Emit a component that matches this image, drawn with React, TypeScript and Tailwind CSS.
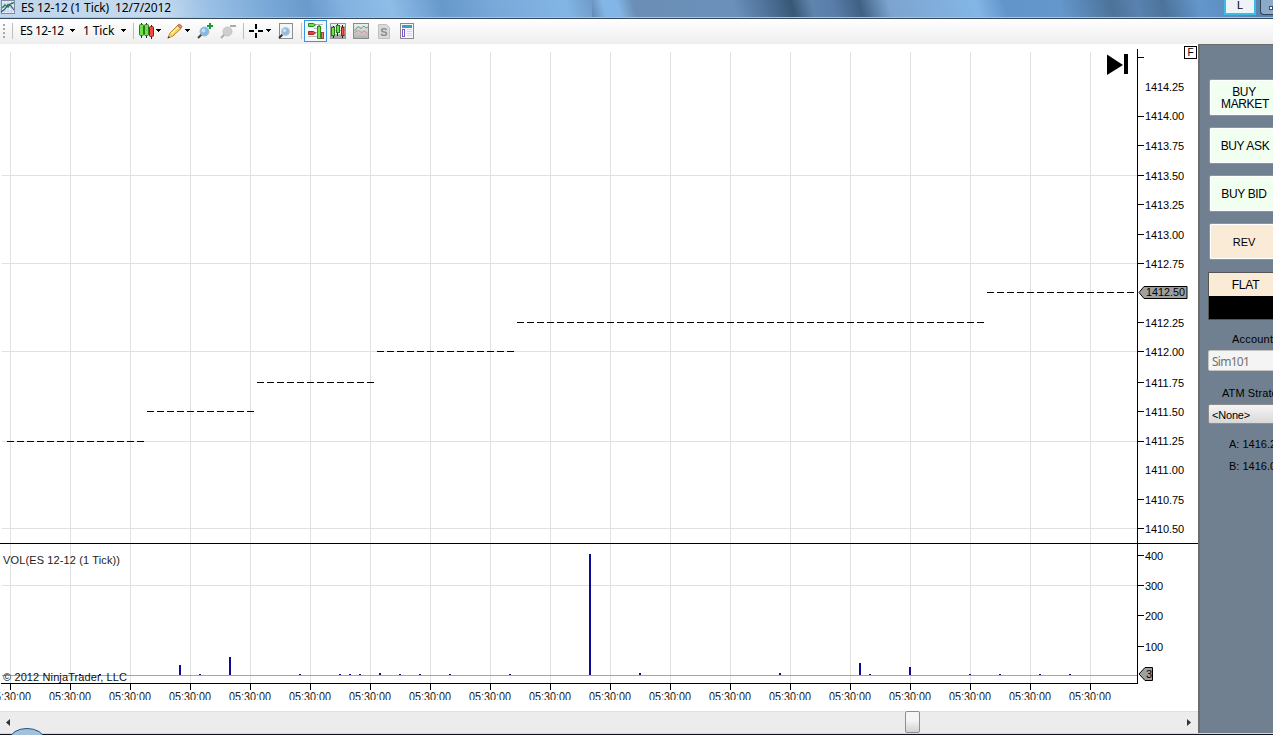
import type { ReactNode } from "react";

interface Run {
  from: number;
  to: number;
  y: number;
}

const GRID_X = Array.from({ length: 19 }, (_, i) => 10 + i * 60);
const GRID_Y = [175, 263, 351, 441, 528, 585];

// y is the tick row, base the text baseline
const PRICES: { label: string; y: number; base: number; tick: boolean }[] = [
  { label: "1414.25", y: 87, base: 91, tick: false },
  { label: "1414.00", y: 116, base: 120, tick: true },
  { label: "1413.75", y: 145, base: 150, tick: true },
  { label: "1413.50", y: 175, base: 180, tick: true },
  { label: "1413.25", y: 204, base: 209, tick: true },
  { label: "1413.00", y: 234, base: 239, tick: true },
  { label: "1412.75", y: 263, base: 268, tick: true },
  { label: "1412.25", y: 322, base: 327, tick: true },
  { label: "1412.00", y: 351, base: 356, tick: true },
  { label: "1411.75", y: 382, base: 387, tick: true },
  { label: "1411.50", y: 411, base: 416, tick: true },
  { label: "1411.25", y: 441, base: 445, tick: true },
  { label: "1411.00", y: 470, base: 474, tick: false },
  { label: "1410.75", y: 499, base: 504, tick: true },
  { label: "1410.50", y: 528, base: 533, tick: true },
];

const VOLUMES = [
  { label: "400", y: 555 },
  { label: "300", y: 585 },
  { label: "200", y: 615 },
  { label: "100", y: 646 },
];

const RUNS: Run[] = [
  { from: 7, to: 144, y: 441 },
  { from: 147, to: 254, y: 411 },
  { from: 257, to: 374, y: 382 },
  { from: 377, to: 514, y: 351 },
  { from: 517, to: 984, y: 322 },
  { from: 987, to: 1137, y: 292 },
];

// [x, top]
const BARS: [number, number][] = [
  [79, 674], [99, 674], [179, 665], [199, 674], [229, 657], [299, 674], [339, 674],
  [349, 674], [359, 674], [379, 673], [399, 674], [419, 674], [449, 674], [509, 674],
  [589, 554], [639, 673], [779, 673], [859, 663], [869, 674], [909, 667], [969, 674],
  [999, 674], [1039, 674], [1069, 674],
];

function Caret() {
  return (
    <svg width="5" height="3" className="shrink-0" shapeRendering="crispEdges">
      <path d="M0 0h5L2.5 3z" fill="#000" />
    </svg>
  );
}

function Separator() {
  return <span className="h-4 w-px shrink-0 bg-[#bdbdbd]" />;
}

function Icon({ children }: { children: ReactNode }) {
  return (
    <svg width="16" height="16" viewBox="0 0 16 16" className="block shrink-0" fill="none">
      {children}
    </svg>
  );
}

function CandlesIcon() {
  return (
    <Icon>
      <path d="M3.500 0v15M8.500 0v15M13.500 2v14" stroke="#222" />
      <rect x="1.500" y="1.500" width="4" height="11" rx="1" fill="#6ee04a" stroke="#287a1c" />
      <rect x="6.500" y="1.500" width="4" height="11" rx="1" fill="#6ee04a" stroke="#287a1c" />
      <rect x="11.500" y="3.500" width="4" height="10" rx="1" fill="#ee4a40" stroke="#8b2018" />
    </Icon>
  );
}

function PencilIcon() {
  return (
    <Icon>
      <path d="M1 15l2-5L11 2l3 3.500L6 13z" fill="#f3d052" stroke="#b88a26" />
      <path d="M4 11L12 3.500" stroke="#fff3a8" strokeWidth="1.500" />
      <path d="M10.500 2.500L12.500 1 15 3.500 13.500 5.500z" fill="#e08878" stroke="#a86a50" />
      <path d="M1 15l1.500-4L5 13.500z" fill="#e2b98b" />
      <path d="M.5 15.500l1-2.500 1.500 1.500z" fill="#333" />
    </Icon>
  );
}

function ZoomInIcon() {
  return (
    <Icon>
      <path d="M4.500 11.500L1 15" stroke="#444" strokeWidth="2" />
      <circle cx="7.500" cy="8.500" r="4.500" fill="#86b7e2" stroke="#a8b8c6" />
      <circle cx="6.500" cy="7.500" r="2" fill="#c0def5" />
      <path d="M13 0v6M10 3h6" stroke="#169a3a" strokeWidth="2" />
    </Icon>
  );
}

function ZoomOutIcon() {
  return (
    <Icon>
      <path d="M4.500 11.500L1 15" stroke="#aaa" strokeWidth="2" />
      <circle cx="7.500" cy="8.500" r="4.500" fill="#cfcfcf" stroke="#c4c4c4" />
      <path d="M10 3h6" stroke="#aaa" strokeWidth="2" />
    </Icon>
  );
}

function CrosshairIcon() {
  return (
    <svg width="14" height="14" className="block shrink-0" shapeRendering="crispEdges">
      <path d="M7 0v5M7 9v5M0 7h5M9 7h5" stroke="#000" strokeWidth="2" />
    </svg>
  );
}

function FrameZoomIcon() {
  return (
    <Icon>
      <rect x="2.500" y=".5" width="13" height="15" fill="#f5f5f5" stroke="#8e8e8e" />
      <path d="M5.500 11.500L2 15" stroke="#333" strokeWidth="2" />
      <circle cx="8.500" cy="8.500" r="4" fill="#8ebce2" stroke="#b8c8d4" />
      <circle cx="7.500" cy="7.500" r="1.800" fill="#c6e0f4" />
    </Icon>
  );
}

function ChartTraderIcon() {
  return (
    <Icon>
      <path d="M6 1.500h9M6 5.500h8M6 9.500h9M0 13.500h10" stroke="#b9b9b9" />
      <path d="M.5.5h5l2 1.500-2 1.500h-5z" fill="#6fe04a" stroke="#2d8a1c" />
      <path d="M.5 8.500h5l2 1.500-2 1.500h-5z" fill="#e64538" stroke="#98281c" />
      <path d="M11 2v14" stroke="#333" />
      <rect x="9.500" y="3.500" width="3" height="12" fill="#79e052" stroke="#348a20" />
      <rect x="13.500" y="9.500" width="2" height="6" fill="#ef7a70" stroke="#9c4038" />
    </Icon>
  );
}

function BarStyleIcon() {
  return (
    <Icon>
      <rect x=".5" y=".5" width="15" height="15" fill="#eee" stroke="#999" />
      <path d="M1 12h14v3H1z" fill="#a8a8a8" />
      <path d="M1 3.500h14M1 7.500h14M1 11.500h14" stroke="#bbb" />
      <path d="M3.500 3v12M7.500 1v12M12.500 2v13" stroke="#222" />
      <rect x="1.500" y="4.500" width="3" height="8" fill="#6ee04a" stroke="#287a1c" />
      <rect x="6.500" y="2.500" width="3" height="7" fill="#6ee04a" stroke="#287a1c" />
      <rect x="11.500" y="4.500" width="2.500" height="8" fill="#e8584e" stroke="#8b2018" />
    </Icon>
  );
}

function IndicatorIcon() {
  return (
    <Icon>
      <defs>
        <linearGradient id="indicator-bg" x1="0" y1="0" x2="0" y2="1">
          <stop offset="0" stopColor="#f0f0f0" />
          <stop offset="1" stopColor="#b0b0b0" />
        </linearGradient>
      </defs>
      <rect x=".5" y=".5" width="15" height="15" fill="url(#indicator-bg)" stroke="#8a8a8a" />
      <path d="M1.500 8L5 3.500l3 2 3-2.500 2 2 2-1" stroke="#56a978" />
      <path d="M1.500 9.500l4-2 3 2 3-1.500 3 2.500" stroke="#dc8a8a" />
    </Icon>
  );
}

function StrategyIcon() {
  return (
    <Icon>
      <path d="M2.500 1.500h8l3 3v11h-11z" fill="#dadada" stroke="#c0c0c0" />
      <text x="8" y="12.500" textAnchor="middle" fill="#8c8c8c" className="font-['Liberation_Sans',sans-serif] text-[11px] font-bold">
        S
      </text>
    </Icon>
  );
}

function PropertiesIcon() {
  return (
    <Icon>
      <rect x="1.500" y=".5" width="13" height="15" fill="#f4f6fc" stroke="#898989" />
      <path d="M3 3.500h10" stroke="#3e9cc8" strokeWidth="3" />
      <rect x="3.500" y="6.500" width="2" height="7" fill="#fff" stroke="#8452d0" />
      <path d="M8 6.500h5M8 8.500h5M8 10.500h5M8 12.500h5" stroke="#d4d4e4" />
    </Icon>
  );
}

function TitleBar() {
  return (
    <header className="relative flex h-[19px] shrink-0 items-start overflow-hidden border-b border-[#34495e] bg-[linear-gradient(75deg,#bfd6ec_0px,#c5daee_160px,#9dc2e6_200px,#79a9d8_260px,#6a9acb_300px,#83b2e0_335px,#8fbde8_380px,#6799cc_430px,#79a8d9_480px,#82b5e5_550px,#6b93bf_585px,#6a8eb5_632px,#6b90ba_710px,#5f84ad_740px)]">
      {/* blurred desktop showing through the glass */}
      <div className="absolute inset-y-0 left-[592px] right-0 bg-[linear-gradient(75deg,#6288b4_0px,#83b5e6_14px,#83b5e6_28px,#6a8eb5_44px,#6b90ba_140px,#4b6f94_175px,#385876_196px,#5f84ae_216px,#587da8_236px,#3f6184_262px,#7da4cf_290px,#83b6e6_375px,#6296cb_402px,#6497cc_455px,#4c7399_505px,#5a82b0_530px,#4c739b_555px,#6397cc_590px,#567ba5_670px)]" />
      <svg width="16" height="15" viewBox="0 0 16 15" className="shrink-0" fill="none">
        <rect x="1.500" y=".5" width="13" height="13" fill="#e8eef7" stroke="#7e8aa8" />
        <path d="M2 4h12M2 7.500h12M2 11h12M4.500 1v12M8 1v12M11.500 1v12" stroke="#b6c1dc" strokeWidth=".6" />
        <path d="M2 8l3-3L8 7l2-3 4-1.500" stroke="#1b9445" strokeWidth="1.500" />
        <path d="M1 12l4-3 3-4.500 3 1.500 3 4" stroke="#34578e" strokeWidth="1.200" />
      </svg>
      <span className="ml-[5px] whitespace-pre text-[12px] leading-[16px] tracking-[-0.11px] text-black">
        {"ES 12-12 (1 Tick)  12/7/2012"}
      </span>
      <div className="relative ml-auto flex shrink-0">
        <span className="mr-1 h-[15px] w-8 border-2 border-t-0 border-[#39bde0] bg-[#eef3f7] text-center font-['Liberation_Sans',sans-serif] text-[11px] leading-[11px]">
          L
        </span>
        <span className="flex h-[15px] w-[13px] items-end rounded-bl border border-r-0 border-t-0 border-[#2f445a] bg-[#8ba9c9] pb-1 pl-2">
          <span className="h-1 w-2 border border-[#3d4d60] bg-white" />
        </span>
      </div>
      <div className="absolute inset-x-0 bottom-0 h-px bg-[#a9c4df]" />
    </header>
  );
}

function Toolbar() {
  return (
    <div className="flex h-[25px] shrink-0 items-center bg-linear-to-b from-white to-[#eeeeee] pb-[2px] text-[12px] text-black">
      <svg width="2" height="14" className="ml-[3px] shrink-0" shapeRendering="crispEdges">
        <path d="M1 0v14" stroke="#a9a9a9" strokeWidth="2" strokeDasharray="2 2" />
      </svg>
      <span className="ml-[7px] flex"><Separator /></span>
      <span className="ml-[7px] w-[45px] whitespace-nowrap tracking-[-0.5px]">ES 12-12</span>
      <span className="ml-[5px] flex"><Caret /></span>
      <span className="ml-2 w-8 whitespace-nowrap tracking-[-0.1px]">1 Tick</span>
      <span className="ml-[6px] mr-[7px] flex"><Caret /></span>
      <Separator />
      <span className="ml-[4px] flex items-center gap-[2px]"><CandlesIcon /><Caret /></span>
      <span className="ml-[6px] flex items-center gap-[2px]"><PencilIcon /><Caret /></span>
      <span className="ml-[7px] flex gap-[7px]"><ZoomInIcon /><ZoomOutIcon /></span>
      <span className="ml-[7px] mr-[5px] flex"><Separator /></span>
      <span className="flex items-center gap-[3px]"><CrosshairIcon /><Caret /></span>
      <span className="ml-[6px] mr-[8px] flex"><FrameZoomIcon /></span>
      <Separator />
      <span className="ml-[2px] flex h-[22px] w-[23px] shrink-0 items-center justify-center border border-[#3a96dc] bg-[#f3f8fd]">
        <ChartTraderIcon />
      </span>
      <span className="ml-[3px] flex gap-[7px]">
        <BarStyleIcon />
        <IndicatorIcon />
        <StrategyIcon />
        <PropertiesIcon />
      </span>
    </div>
  );
}

function Chart() {
  return (
    <svg
      width="1198"
      height="667"
      viewBox="0 44 1198 667"
      className="block shrink-0 bg-white font-['Liberation_Sans',sans-serif] text-[11px]"
    >
      <g shapeRendering="crispEdges">
        {GRID_X.map((x) => (
          <rect key={x} x={x} y={52} width={1} height={631} fill="#e0e0e0" />
        ))}
        {GRID_Y.map((y) => (
          <rect key={y} x={2} y={y} width={1135} height={1} fill="#e0e0e0" />
        ))}
        {RUNS.map((run) => (
          <path key={run.y} d={`M${run.from} ${run.y + 0.5}H${run.to}`} stroke="#000" strokeDasharray="7 3" />
        ))}
        <rect x={2} y={675} width={1135} height={1} fill="#a5a5a5" />
        {BARS.map(([x, top]) => (
          <rect key={x} x={x} y={top} width={2} height={675 - top} fill="#0a0a96" />
        ))}

        {/* axes */}
        <rect x={0} y={543} width={1198} height={1} />
        <rect x={1137} y={49} width={1} height={635} />
        <rect x={1} y={683} width={1137} height={1} />
        <rect x={1138} y={57} width={6} height={1} />
        {PRICES.filter((p) => p.tick).map((p) => (
          <rect key={p.label} x={1138} y={p.y} width={6} height={1} />
        ))}
        {VOLUMES.map((v) => (
          <rect key={v.label} x={1138} y={v.y} width={6} height={1} />
        ))}
        {GRID_X.map((x) => (
          <rect key={x} x={x} y={684} width={1} height={6} />
        ))}
      </g>

      {PRICES.map((p) => (
        <text key={p.label} x={1145} y={p.base} textLength={39}>
          {p.label}
        </text>
      ))}
      {VOLUMES.map((v) => (
        <text key={v.label} x={1145} y={v.y + 5} textLength={18}>
          {v.label}
        </text>
      ))}

      <clipPath id="time-row">
        <rect x={0} y={690} width={1198} height={10} />
      </clipPath>
      <g clipPath="url(#time-row)" className="text-[12px]">
        {GRID_X.map((x) => (
          <text key={x} x={x - 21} y={701} textLength={42} lengthAdjust="spacingAndGlyphs" fill="#222">
            05:30:00
          </text>
        ))}
      </g>

      <text x={3} y={564} textLength={117} fill="#222">
        VOL(ES 12-12 (1 Tick))
      </text>
      <text x={3} y={681} textLength={124} fill="#111">
        © 2012 NinjaTrader, LLC
      </text>

      {/* price and volume markers */}
      <path d="M1139 292.500l5-6h43v12h-43z" fill="#a0a0a0" stroke="#000" />
      <text x={1146} y={296} textLength={39} lengthAdjust="spacingAndGlyphs" className="text-[10px]">
        1412.50
      </text>
      <path d="M1139 674l6-6.500h7.500v13h-7.500z" fill="#a0a0a0" stroke="#000" />
      <text x={1146} y={678}>
        3
      </text>

      <path d="M1107 54.500l16 10.500-16 10z" />
      <rect x={1124} y={54} width={4} height={20} />
      <rect x={1184.5} y={46.5} width={12} height={12} fill="#fff" stroke="#000" />
      <text x={1187.5} y={56} className="text-[10px]">
        F
      </text>
    </svg>
  );
}

function ScrollBar() {
  return (
    <div className="flex h-[23px] shrink-0 items-center border-t border-[#e0e0e0] bg-[#ececec] pb-[2px]">
      <svg width="4" height="7" className="ml-[6px]">
        <path d="M4 0v7L0 3.500z" fill="#333" />
      </svg>
      <span className="ml-[895px] h-[22px] w-[15px] shrink-0 rounded-[2px] border border-[#8f8f8f] bg-linear-to-b from-[#f5f5f5] from-40% to-[#d2d2d4]" />
      <svg width="4" height="7" className="ml-auto mr-[7px]">
        <path d="M0 0v7l4-3.500z" fill="#333" />
      </svg>
    </div>
  );
}

function OrderButton({ tone, children }: { tone: "buy" | "reverse"; children: ReactNode }) {
  return (
    <button
      type="button"
      className={
        "flex h-[37px] w-[70px] shrink-0 items-center justify-center rounded-[2px] border border-[#8f949b] text-center text-[12px] leading-[12px] tracking-[-0.35px] shadow-[inset_0_0_0_1px_#ffffff] " +
        (tone === "buy" ? "bg-[#f0fff0]" : "bg-[#faebd7]")
      }
    >
      {children}
    </button>
  );
}

function ChartTrader() {
  return (
    <aside className="flex w-[75px] shrink-0 flex-col overflow-hidden border-l-2 border-t border-[#6c6c6c] bg-[#708090] font-['Liberation_Sans',sans-serif] text-black">
      <div className="ml-[9px] mt-[34px] flex flex-col gap-[11px]">
        <OrderButton tone="buy">
          <span className="w-[46px]">BUY MARKET</span>
        </OrderButton>
        <OrderButton tone="buy"><span className="pl-0.5">BUY ASK</span></OrderButton>
        <OrderButton tone="buy">BUY BID</OrderButton>
        <OrderButton tone="reverse">
          <span className="text-[11px] tracking-normal">REV</span>
        </OrderButton>
      </div>
      <div className="ml-2 mt-3 h-12 w-[75px] shrink-0 border border-[#555] bg-black">
        <div className="flex h-[23px] items-center justify-center bg-[#faebd7] text-[12px] tracking-[-0.2px]">FLAT</div>
      </div>
      <span className="ml-8 mt-[13px] h-[10px] shrink-0 overflow-hidden whitespace-nowrap text-[11px] leading-[13px] tracking-[0.2px]">
        Account
      </span>
      <span className="ml-2 mt-[7px] h-[21px] w-20 shrink-0 rounded-[2px] border border-[#c4c4c4] bg-[#f4f4f4] pl-[3px] font-['Noto_Sans',sans-serif] text-[12px] leading-[21px] tracking-[-0.75px] text-[#707070]">
        Sim101
      </span>
      <span className="ml-[22px] mt-4 h-[11px] shrink-0 overflow-hidden whitespace-nowrap text-[11px] leading-[12px] tracking-[0.1px]">
        ATM Strategy
      </span>
      <span className="ml-2 mt-[6px] h-5 w-20 shrink-0 rounded-[2px] border border-[#8e8e8e] bg-linear-to-b from-[#f5f5f5] to-[#d8d8d8] pl-[3px] text-[11px] leading-[21px] tracking-[-0.2px]">
        {"<None>"}
      </span>
      <span className="ml-[29px] mt-[14px] h-[11px] shrink-0 overflow-hidden whitespace-nowrap text-[11px] leading-[12px]">A: 1416.25</span>
      <span className="ml-[29px] mt-[12px] h-[9px] shrink-0 overflow-hidden whitespace-nowrap text-[11px] leading-[11px]">B: 1416.00</span>
    </aside>
  );
}

export default function App() {
  return (
    <div className="relative flex h-[735px] w-[1273px] flex-col overflow-hidden bg-[#11131c] font-['Noto_Sans',sans-serif]">
      <TitleBar />
      <Toolbar />
      <div className="flex h-[689px] shrink-0">
        <main className="flex w-[1198px] flex-col bg-[#ececec]">
          <Chart />
          <ScrollBar />
        </main>
        <ChartTrader />
      </div>
      <div className="h-px shrink-0 bg-[#d4d8de]" />
      {/* start orb peeking over the taskbar */}
      <svg width="32" height="7" className="absolute bottom-0 left-[11px]">
        <ellipse cx="16" cy="11" rx="17" ry="10.500" fill="#a4c1dc" stroke="#1e5180" />
      </svg>
    </div>
  );
}
